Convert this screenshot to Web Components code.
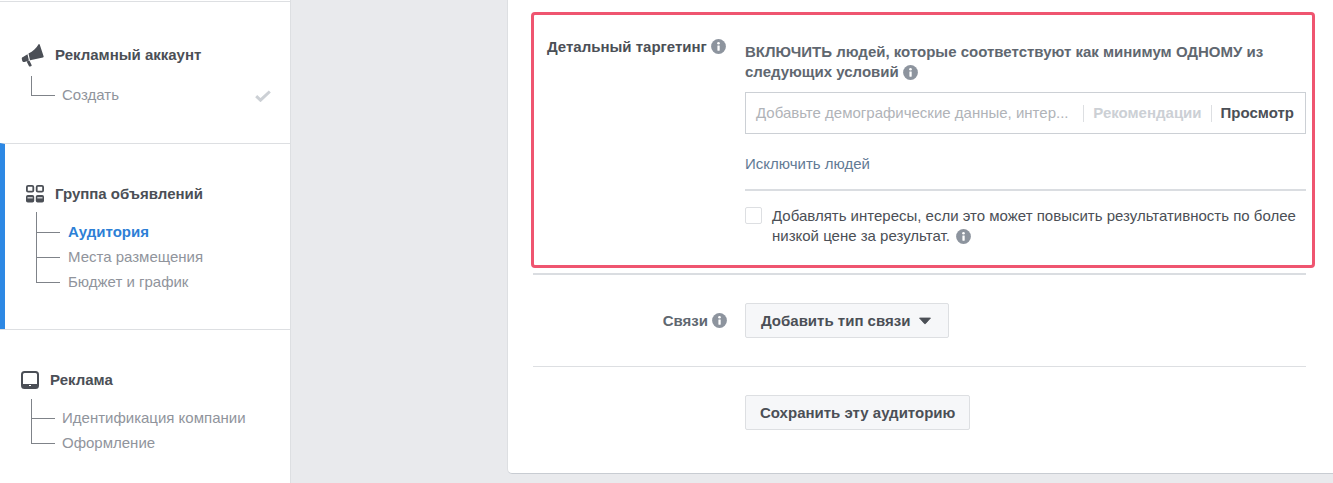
<!DOCTYPE html>
<html lang="ru"><head><meta charset="utf-8"><title>Аудитория</title>
<style>
html,body{margin:0;padding:0;height:100%;overflow:hidden;background:#e9eaed}
body{font:15px/20px "Liberation Sans",Arial,sans-serif;color:#4b4f56}
</style></head><body>
<ads-page>
  <ads-sidebar slot="nav">
    <nav-section icon="horn" top="41" gap="9" height="141">Рекламный аккаунт
      <nav-item slot="items" first last done>Создать</nav-item>
    </nav-section>
    <nav-section icon="grid" active gap="6" height="185" top="38" lead="8">Группа объявлений
      <nav-item slot="items" first state="current" deep>Аудитория</nav-item>
      <nav-item slot="items" deep>Места размещения</nav-item>
      <nav-item slot="items" last deep>Бюджет и график</nav-item>
    </nav-section>
    <nav-section icon="tablet" gap="7" height="153" top="38">Реклама
      <nav-item slot="items" first>Идентификация компании</nav-item>
      <nav-item slot="items" last>Оформление</nav-item>
    </nav-section>
  </ads-sidebar>
  <audience-card slot="main">
    <target-box></target-box>
    <form-row label="Связи" info>
      <fb-button caret>Добавить тип связи</fb-button>
    </form-row>
    <form-row>
      <fb-button>Сохранить эту аудиторию</fb-button>
    </form-row>
  </audience-card>
</ads-page>
<script>
function def(name, css, html, init){
  customElements.define(name, class extends HTMLElement{
    constructor(){super();this.attachShadow({mode:'open'});}
    connectedCallback(){
      this.shadowRoot.innerHTML='<style>'+css+'</style>'+(typeof html==='function'?html(this):html);
      if(init)init(this);
    }
  });
}
const ICONS={
 horn:'<svg width="24" height="24" viewBox="0 0 24 24"><path fill="#4b4f56" d="M17.600 1.200c.5-.3 1 0 1.200.5l3.800 11.600c.2.600-.1 1-.6 1.100L9 17.200l-1.500-6.600C12 8.600 15.400 5 17.600 1.200z"/><path fill="#4b4f56" d="M6.500 11.200l1.400 6.200-4.400 1.500c-1 .3-2-.2-2.300-1.200l-.4-1.600c-.2-1 .3-1.900 1.200-2.200z"/><path fill="#4b4f56" d="M5.600 18.400l2.800-.8 2.200 4.400c.3.600-.1 1.100-.6 1.200l-1 .3c-.5.1-.9-.1-1.100-.5z"/></svg>',
 grid:'<svg width="18" height="18" viewBox="0 0 18 18"><g fill="none" stroke="#4b4f56" stroke-width="1.800"><rect x=".9" y=".9" width="6.400" height="5.700" rx="1.200"/><rect x="10.700" y=".9" width="6.400" height="5.700" rx="1.200"/></g><g fill="#4b4f56"><rect x="0" y="10" width="8.200" height="7.500" rx="1.800"/><rect x="9.800" y="10" width="8.200" height="7.500" rx="1.800"/></g><g fill="#fff" opacity=".85"><rect x="1.500" y="12.200" width="5.200" height="1.200"/><rect x="11.300" y="12.200" width="5.200" height="1.200"/></g></svg>',
 tablet:'<svg width="18" height="18" viewBox="0 0 18 18"><rect x="1" y="1" width="16" height="16" rx="2.500" fill="none" stroke="#4b4f56" stroke-width="2"/><rect x="1" y="13" width="16" height="3" fill="#4b4f56"/><rect x="8" y="14" width="2" height="1" fill="#fff"/></svg>'
};
def('ads-page',':host{display:flex;align-items:flex-start;height:483px;width:1333px}.gap{width:216px;flex:none}',
 '<slot name="nav"></slot><div class="gap"></div><slot name="main"></slot>');
def('ads-sidebar',':host{display:block;flex:none;box-sizing:border-box;width:291px;height:483px;background:#fff;border-right:1px solid #dddfe2;padding-top:1px}',
 '<slot></slot>');
def('nav-section',
 `:host{display:block;box-sizing:border-box;border-top:1px solid #dddfe2;padding-left:21px;overflow:hidden}
  :host([active]){border-left:5px solid #2d88e4}
  header{display:flex;align-items:center;height:24px;font-weight:bold;color:#4b4f56}
  .ic{flex:none;display:flex;align-items:center;justify-content:center}
  ul{margin:0;padding:0 0 0 10px;display:block}`,
 h=>`<header><span class="ic">${ICONS[h.getAttribute('icon')]}</span><span><slot></slot></span></header><ul><slot name="items"></slot></ul>`,
 h=>{
  const a=k=>h.getAttribute(k);
  h.style.paddingTop=a('top')+'px';
  h.style.height=(+a('height')+1)+'px';
  if(a('lead'))h.style.setProperty('--lead',a('lead')+'px');
  const s=h.shadowRoot;
  s.querySelector('ul').style.marginTop=a('gap')+'px';
  s.querySelector('header').style.gap=(a('icon')==='horn'?10:11)+'px';
 });
def('nav-item',
 `:host{display:flex;color:#90949c}
  .conn{flex:none;width:24px;display:flex;flex-direction:column;margin-right:7px}
  .up{flex:none;height:12px;border-left:1px solid #7f8389;border-bottom:1px solid #7f8389}
  .down{flex:1;border-left:1px solid #7f8389}
  :host([first]) .up{height:calc(12px + var(--lead,7px))}
  :host([last]) .down{border-left-color:transparent}
  .t{height:25px;line-height:23px}
  :host([first]) .t{padding-top:var(--lead,7px)}
  :host([deep]) .conn{margin-right:8px}
  :host([state=current]){color:#2d7fd6;font-weight:bold}
  .chk{margin-left:auto;margin-right:19px;align-self:flex-end;height:25px;display:flex;align-items:center}`,
 h=>`<span class="conn"><span class="up"></span><span class="down"></span></span><span class="t"><slot></slot></span>${h.hasAttribute('done')?'<span class="chk"><svg width="16" height="12" viewBox="0 0 16 12"><path d="M1.200 6.200l4.300 4L14.800 1.500" fill="none" stroke="#ccd0d5" stroke-width="3"/></svg></span>':''}`);
def('info-icon',':host{display:inline-block;width:15px;height:15px;vertical-align:-3px}svg{display:block}',
 '<svg width="15" height="15" viewBox="0 0 15 15"><circle cx="7.500" cy="7.500" r="7.400" fill="#8d949e"/><rect x="6.400" y="6.400" width="2.300" height="5.300" rx=".4" fill="#fff"/><circle cx="7.500" cy="4.200" r="1.300" fill="#fff"/></svg>');
def('fb-button',
 `:host{display:inline-flex;align-items:center;box-sizing:border-box;height:35px;padding:0 14px;background:#f6f7f9;border:1px solid #dddfe2;border-radius:2px;font-weight:bold;color:#4b4f56;white-space:nowrap}
  :host([caret]){padding:0 16px 0 15px}
  svg{margin-left:8px;display:block}`,
 h=>`<slot></slot>${h.hasAttribute('caret')?'<svg width="14" height="8" viewBox="0 0 14 8"><path d="M1.500 1h11L7.600 6.600c-.3.3-.9.300-1.200 0z" fill="#4b4f56" stroke="#4b4f56" stroke-width=".8" stroke-linejoin="round"/></svg>':''}`);
def('form-row',
 `:host{display:flex;box-sizing:border-box;margin-left:25px;width:773px;border-bottom:1px solid #dddfe2;padding:28px 0}
  :host(:last-child){border-bottom:0}
  :host(:nth-child(2)){border-top:2px solid #dadde1}
  .l{flex:none;width:194px;display:flex;align-items:center;justify-content:flex-end;gap:4px;font-weight:bold;color:#606770;margin-right:18px}`,
 h=>{const l=h.getAttribute('label');return `<div class="l">${l?`<span>${l}</span>`:''}${h.hasAttribute('info')?'<info-icon></info-icon>':''}</div><slot></slot>`;});
def('audience-card',
 `:host{display:block;box-sizing:border-box;flex:none;width:826px;height:474px;background:#fff;border-left:1px solid #dddfe2;border-bottom:1px solid #c8ccd2;border-radius:0 0 0 5px;padding-top:12px}`,
 '<slot></slot>');
def('target-box',
 `:host{display:flex;box-sizing:border-box;margin:0 0 5px 23px;width:784px;height:256px;border:3px solid #ef5570;border-radius:4px;padding:22px 6px 0 13px;background:#fff}
  .lab{flex:none;width:198px;font-weight:bold;color:#4b4f56;display:flex;align-items:flex-start;gap:4px;white-space:nowrap}
  .c{flex:1;min-width:0;padding-top:5px}
  .h{font-weight:bold;color:#606770;height:40px}
  .inp{box-sizing:border-box;display:flex;align-items:center;height:42px;margin-top:10px;border:1px solid #ccd0d5;padding-left:10px;white-space:nowrap}
  .ph{flex:1;min-width:0;color:#b0b3b8}
  .sep{flex:none;width:1px;height:17px;background:#dddfe2;margin:0 9px}
  .rec{font-weight:bold;color:#ccd0d5}
  .br{font-weight:bold;color:#4b4f56;margin-right:11px}
  .ex{color:#627a95;margin-top:20px}
  hr{border:0;height:2px;background:#dadde1;margin:15px 0 16px}
  .cb{display:flex;gap:10px;color:#4b4f56}
  .box{flex:none;box-sizing:border-box;width:17px;height:17px;border:1px solid #dddfe2;border-radius:2px;background:#fff}
  .cbt{margin-top:-1px}`,
 `<div class="lab"><span>Детальный таргетинг</span><info-icon style="margin-top:2px"></info-icon></div>
  <div class="c">
   <div class="h">ВКЛЮЧИТЬ людей, которые соответствуют как минимум ОДНОМУ из следующих условий <info-icon></info-icon></div>
   <div class="inp"><span class="ph">Добавьте демографические данные, интер...</span><span class="sep"></span><span class="rec">Рекомендации</span><span class="sep"></span><span class="br">Просмотр</span></div>
   <div class="ex">Исключить людей</div>
   <hr>
   <div class="cb"><span class="box"></span><div class="cbt">Добавлять интересы, если это может повысить результативность по более низкой цене за результат. <info-icon style="margin-left:2px"></info-icon></div></div>
  </div>`);
</script>
</body></html>
